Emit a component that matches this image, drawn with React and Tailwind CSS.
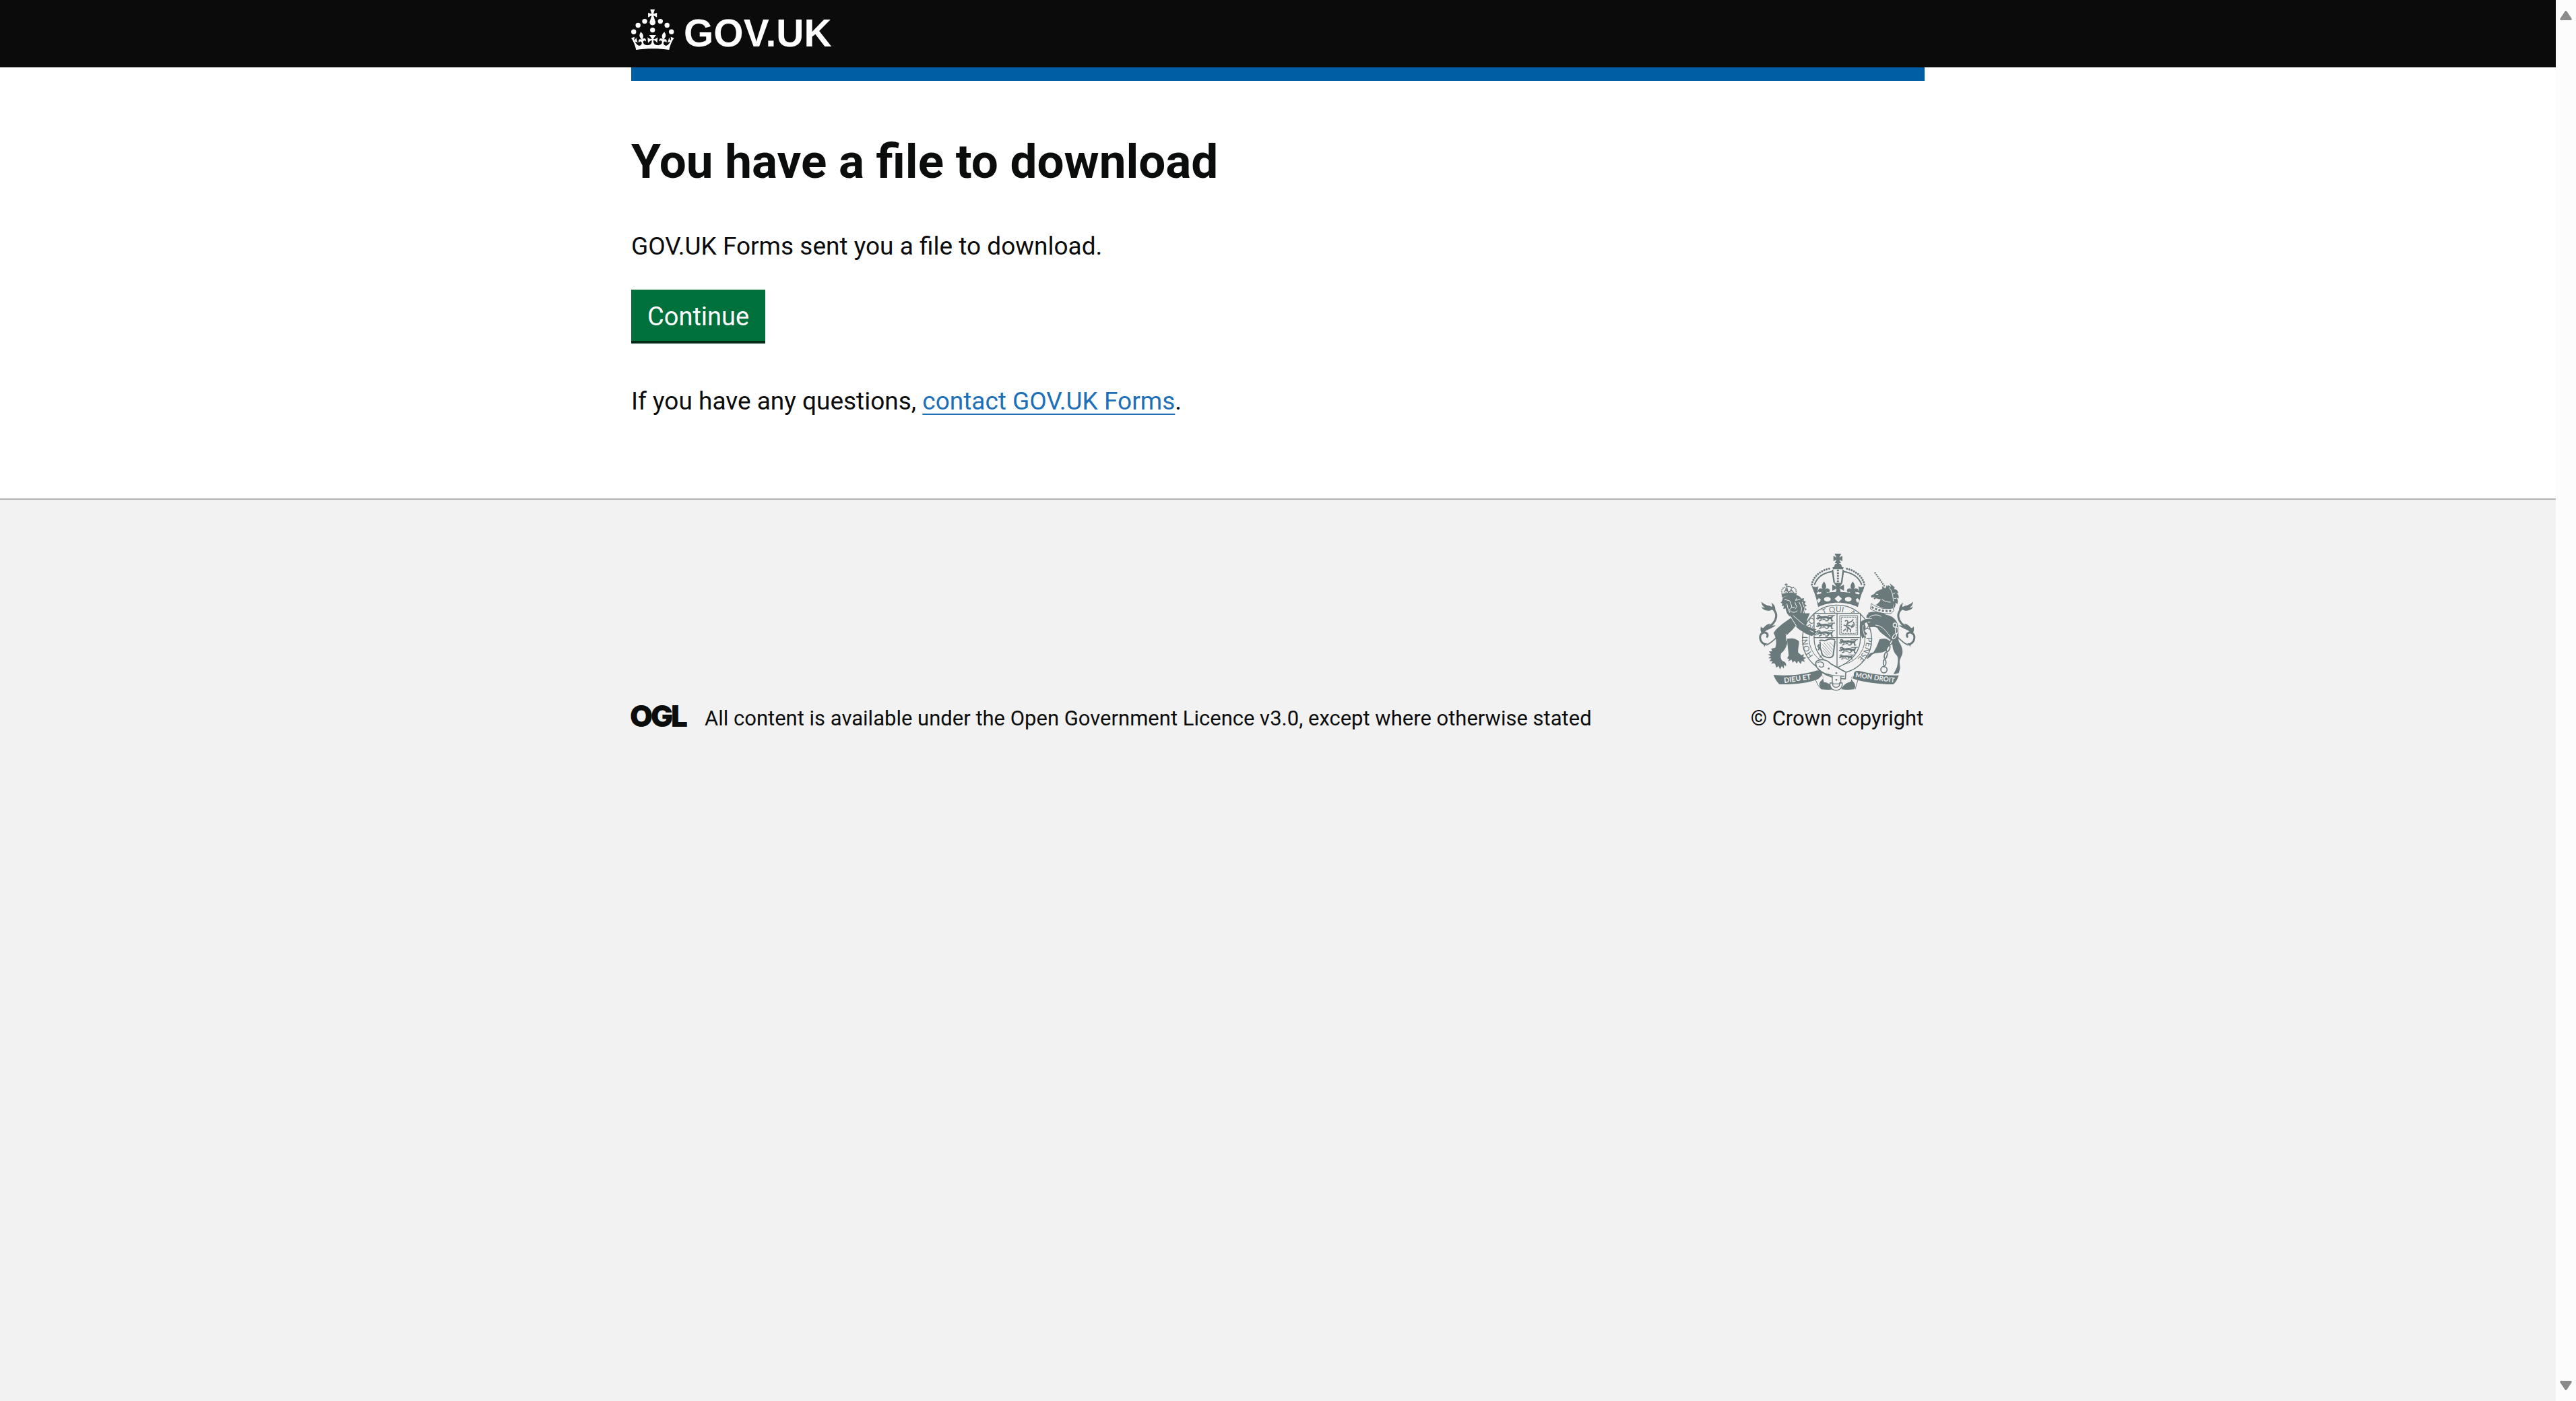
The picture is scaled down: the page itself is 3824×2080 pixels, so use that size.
import React from "react";

const FONT = "font-['Roboto','Liberation_Sans',sans-serif]";

function Crown() {
  return (
    <svg viewBox="0 0 64 60" className="h-[60px] w-[64px] fill-current" aria-hidden="true">
      <circle cx="20" cy="17.6" r="3.7" />
      <circle cx="10.2" cy="23.5" r="3.7" />
      <circle cx="3.7" cy="33.2" r="3.7" />
      <circle cx="31.7" cy="30.6" r="3.7" />
      <circle cx="43.3" cy="17.6" r="3.7" />
      <circle cx="53.2" cy="23.5" r="3.7" />
      <circle cx="59.7" cy="33.2" r="3.7" />
      <path d="M33.1,9.8c.2-.1.3-.3.5-.5l4.6,2.4v-6.8l-4.6,1.5c-.1-.2-.3-.3-.5-.5l1.9-5.9h-6.7l1.9,5.9c-.2.1-.3.3-.5.5l-4.6-1.5v6.8l4.6-2.4c.1.2.3.3.5.5l-2.6,8c-.9,2.8,1.2,5.7,4.1,5.7h0c3,0,5.1-2.9,4.1-5.7l-2.6-8ZM37,37.9s-3.4,3.8-4.1,6.1c2.2,0,4.2-.5,6.4-2.8l-.7,8.5c-2-2.8-4.4-4.1-5.7-3.8.1,3.1.5,6.7,5.8,7.2,3.7.3,6.7-1.5,7-3.8.4-2.6-2-4.3-3.7-1.6-1.4-4.5,2.4-6.1,4.9-3.2-1.9-4.5-1.8-7.7,2.4-10.9,3,4,2.6,7.3-1.2,11.1,2.4-1.3,6.2,0,4,4.6-1.2-2.8-3.7-2.2-4.2.2-.3,1.7.7,3.7,3,4.2,1.9.3,4.7-.9,7-5.9-1.3,0-2.4.7-3.9,1.7l2.4-8c.6,2.3,1.4,3.7,2.2,4.5.6-1.6.5-2.8,0-5.3l5,1.8c-2.6,3.6-5.2,8.7-7.3,17.5-7.4-1.1-15.7-1.7-24.5-1.7h0c-8.8,0-17.1.6-24.5,1.7-2.1-8.9-4.7-13.9-7.3-17.5l5-1.8c-.5,2.5-.6,3.7,0,5.3.8-.8,1.6-2.3,2.2-4.5l2.4,8c-1.5-1-2.6-1.7-3.9-1.7,2.3,5,5.2,6.2,7,5.9,2.3-.4,3.3-2.4,3-4.2-.5-2.4-3-3.1-4.2-.2-2.2-4.6,1.6-6,4-4.6-3.7-3.7-4.2-7.1-1.2-11.1,4.2,3.2,4.3,6.4,2.4,10.9,2.5-2.8,6.3-1.3,4.9,3.2-1.8-2.7-4.1-1-3.7,1.6.3,2.3,3.3,4.1,7,3.8,5.4-.5,5.7-4.2,5.8-7.2-1.3-.2-3.7,1-5.7,3.8l-.7-8.5c2.2,2.3,4.2,2.7,6.4,2.8-.7-2.3-4.1-6.1-4.1-6.1h10.6,0Z" />
    </svg>
  );
}

function OglLogo() {
  return (
    <svg
      viewBox="0 0 82 34"
      className="h-[34px] w-[82px] shrink-0 overflow-visible fill-current font-['Inter',sans-serif] text-[44px] font-black"
      role="img"
      aria-label="OGL"
    >
      <text x="-2" y="33">O</text>
      <text x="29" y="33">G</text>
      <text x="59" y="33">L</text>
    </svg>
  );
}

function Passant({ x, y }) {
  return (
    <g transform={`translate(${x} ${y})`} fill="none" stroke="currentColor" strokeLinecap="round" strokeLinejoin="round">
      <path d="M6 4c4-4 11-3 11 2s-5 5-9 4" strokeWidth="6" />
      <path d="M17 9c12 4 22-3 34 1s11 5 17 1" strokeWidth="10" />
      <path d="M16 12 8 17l-6-2M22 13v9l-8 3M50 13l6 6-6 6h-7M62 12l8 6-2 7h6" strokeWidth="5" />
      <path d="M68 9c9-1 6-9 0-8s-9 2-14 0M74 2l8-1M30 20c4-3 8-2 10 0" strokeWidth="4" />
    </g>
  );
}

function SideTail() {
  return (
    <g>
      <path d="M122 470C96 462 90 428 112 418c14-5 24 7 18 18M104 424c22-30 62-40 66-78 2-22-14-38-32-44" fill="none" stroke="currentColor" strokeWidth="9" strokeLinecap="round" />
      <path d="M126 474C152 462 182 432 214 388" fill="none" stroke="currentColor" strokeWidth="5" />
      <path d="M156 314C140 292 122 300 104 280c2 16 8 22 16 26-8 0-12-2-16-4 6 14 20 18 36 18zM150 306c4-8 2-14-2-22 14 8 20 20 18 36zM108 424C98 410 100 400 102 390c4 8 8 8 12 6 8-10 20-20 34-18-8 4-10 8-12 14 10-6 22-8 32-6-16 10-34 20-46 22zM112 464l6 18c2-10 6-14 16-16z" />
    </g>
  );
}

function RoyalArms() {
  return (
    <svg viewBox="66 66 750 612" className="h-[204px] w-[250px] fill-current text-[#6a797c]" aria-hidden="true">
      <defs>
        <path id="garter" d="M441 568A131 121 0 0 1 441 326A131 121 0 0 1 441 568" />
      </defs>

      {/* crown */}
      <path d="M430 66h30l-9 17 14-7v24l-14-8 8 16h-28l8-16-14 8V76l14 7zM428 128c0-14 8-20 17-20s18 6 18 20z" />
      <path d="M421 126h49l-2 10h-45zM424 136l8 60h-7l-8-56zM466 136l-8 60h7l8-56z" />
      <path d="M445 137v58" fill="none" stroke="currentColor" strokeWidth="9" strokeDasharray="8 4" />
      <g fill="none" stroke="currentColor" strokeLinecap="round">
        <path d="M329 204C336 164 372 138 414 131M563 204C554 164 518 138 476 131" strokeWidth="9" strokeDasharray="0.1 11" />
        <path d="M341 203C352 172 380 152 416 146M550 203C540 172 510 152 474 146" strokeWidth="6" />
      </g>
      <path d="M328 210c20 4 22 22 32 26-8 4-10 2-10 6l8 14C398 240 492 240 534 256l8-14c0-4-4-2-10-6 12-6 14-22 32-26-14 34-22 60-30 94-52-26-126-26-177 0-6-34-14-60-29-94z" />
      <path d="M361 246c10-8 66-14 84-14s74 6 86 14l8-30c-10 2-14-4-16-10H370c-4 8-8 10-16 10z" fill="#f2f2f2" />
      <path d="M332 212c14 4 20 4 26-2l-4 26h-16zM562 212c-14 4-20 4-26-2l4 26h16zM427 196h39l-12 17 18-9v27l-18-9 6 27h-27l6-27-19 9v-27l18 9z" />
      {[383, 511].map((x) => (
        <path
          key={x}
          transform={`translate(${x} 0)`}
          d="M0 190c12 16 12 26 4 36 6-8 20-8 22 4 0 8-10 12-14 4 2 10-2 12-6 14h-12c-4-2-8-4-6-14-4 8-14 4-14-4 2-12 16-12 22-4-8-10-8-20 4-36z"
        />
      ))}
      <path d="M345 250c60-18 142-18 202 0l-4 14c-50-16-144-16-194 0z" />
      <g fill="#f2f2f2">
        <path d="M352 274l8-10 9 6-5 12-7 2zM541 274l-8-10-9 6 5 12 7 2zM447 252l16 15-16 15-17-15z" />
        <ellipse cx="398" cy="269" rx="15" ry="10" />
        <ellipse cx="491" cy="269" rx="15" ry="10" />
      </g>

      {/* lion */}
      <SideTail />
      <path d="M238 352c22-16 50-22 82-20l-14 32c14 22 26 34 44 40l2 18c-12 4-24 4-34 2-24-6-48-18-62-36-14 22-34 34-40 44 0 16 6 28 2 38-6 18-14 30-26 40-4 14-2 24 4 32 12 6 20 8 18 26l-8-8-2 18-9-12-8 16-6-16-12 8c0-8-2-14-6-20l-16 2 8-10c-6-2-12-2-16-1l10-12-14-2 12-8-14-8 13-2-8-12h14l-4-12 18-4c8-22 4-46-8-66 18-26 50-48 78-67z" />
      <path d="M218 446c20-6 44-2 54 12 0 16-6 32-4 48l14 12 12-4-4 12 14 4-12 6 6 12-14-4-4 14-12-14-6 12-10-14-8 10-6-14-14 8 4-12c-10 2-10-4-2-14z" />
      <path d="M200 262c-4 14-4 18-10 22l8 4-4 12 10-2-2 14 10-2c2 16 10 34 30 42 24 4 42 0 56-18l-2-14 10-6-8-8 8-10-10-6 6-12-10-2 2-12-12 2c-6-10-16-16-30-16-20 0-40 4-52 12z" />
      <path
        d="M208 270l22 6 4 8M262 264l-6 10 20-4M234 284l6 20-10 10 2 10M254 284l8 20-8 8M240 306l12-2M238 324c6 6 18 4 26-4M272 282l12 26-4 20M218 290l4 18 8 20M286 282l8 22M232 344l28 44M246 342l62 54 34 14M214 424l2 30M300 300l-8 30"
        fill="none"
        stroke="#f2f2f2"
        strokeWidth="3"
        strokeLinecap="round"
      />
      <path d="M196 262c18-10 44-12 62-8l4-10c-20-8-44-6-68 2z" />
      <g fill="none" stroke="currentColor">
        <path d="M196 244c-4-16 2-26 12-28 6 2 8 12 6 24M258 246c4-16-2-28-14-30-8 2-10 12-8 26" strokeWidth="5" strokeDasharray="5 3" />
        <path d="M214 198v12M208 204h13M216 210l8 32M218 212c10-2 18 2 24 8M204 238l10-12 12 12 12-10 12 14" strokeWidth="4" />
      </g>

      {/* unicorn */}
      <g transform="matrix(-1 0 0 1 884 0)">
        <SideTail />
      </g>
      <path d="M609 149l46 66" fill="none" stroke="currentColor" strokeWidth="7" strokeDasharray="6 4" />
      <path d="M594 262l-1-10 14-7c8-12 20-16 36-22l-2-12 16 10 4-14 8 14c16 6 24 18 24 34 0 14 4 30-4 40-24-6-34-4-46-24-10-2-20-2-28-6l-8 5-3-6 8-4z" />
      <path d="M636 262l54-4 2 54c-30 2-54-4-78-18 14-8 22-18 22-32z" />
      <path d="M668 206l14 8-6-16 22 18-4 8c14 0 18 8 20 18l-9-2c10 8 12 16 10 26l-9-4c6 8 8 18 4 28l-9-6c2 8 0 18-6 26-4-20-6-40-10-56s-12-30-24-36z" />
      <path d="M672 216c14 14 18 34 20 62M700 240l-10 6M706 264l-10 2M614 246l10 2M640 268c10 10 24 14 40 14" fill="none" stroke="#f2f2f2" strokeWidth="3" />
      <path d="M594 288c28 22 64 28 96 20l4 12-12 12c-32 4-66-4-92-20z" fill="#f2f2f2" stroke="currentColor" strokeWidth="3" />
      <path d="M596 304c28 16 60 20 90 16" fill="none" stroke="currentColor" strokeWidth="9" strokeDasharray="9 7" />
      <path d="M578 330c22-10 56-6 82 8 28 4 50 24 54 52 4 24-2 48 2 66 10 18 20 34 16 56-6 18-14 28-12 42l2 22-6 22-24 6c6-14 16-26 18-44 2-16 6-34-6-44-14-16-16-36-18-58-22-24-50-32-66-62-18-8-38-2-50 8l-6 38 4 6-16-12c-2-22-2-40 4-52 20-6 32-12 46-22l-8-8-22-2c0-12 2-14 10-18z" />
      <path d="M572 384c-8 10-8 20 0 32 2 16-6 24-14 28-8-16-14-40-10-64 10-10 24-10 38-6zM630 448c20-8 44-2 48 12-2 28-18 44-40 46-14 4-36-2-48 18l-16 12c4-16 12-30 28-30 12-14 20-36 28-58z" />
      <g fill="none" stroke="#f2f2f2" strokeWidth="4">
        <ellipse cx="699" cy="384" rx="8" ry="9" />
        <ellipse cx="707" cy="408" rx="6" ry="14" />
        <ellipse cx="697" cy="434" rx="6" ry="13" transform="rotate(35 697 434)" />
        <path d="M584 350c16-14 40-14 54-4M612 384c24 2 40 14 66 52" strokeWidth="3" />
      </g>
      <g fill="#f2f2f2" stroke="currentColor" strokeWidth="5">
        <ellipse cx="682" cy="461" rx="5" ry="13" transform="rotate(28 682 461)" />
        <ellipse cx="669" cy="489" rx="6" ry="14" transform="rotate(24 669 489)" />
        <ellipse cx="658" cy="519" rx="6" ry="14" transform="rotate(14 658 519)" />
        <ellipse cx="653" cy="551" rx="6" ry="13" />
        <circle cx="650" cy="583" r="14" />
      </g>

      {/* garter and shield */}
      <ellipse cx="441" cy="447" rx="154" ry="152" fill="#f2f2f2" stroke="currentColor" strokeWidth="4" />
      <ellipse cx="441" cy="447" rx="124" ry="116" fill="none" stroke="currentColor" strokeWidth="3" />
      <g className="font-['Lato',sans-serif] text-[35px] font-normal">
        <text><textPath href="#garter" startOffset="15%">HONI</textPath></text>
        <text><textPath href="#garter" startOffset="31%">SOI</textPath></text>
        <text><textPath href="#garter" startOffset="42%">T QUI</textPath></text>
        <text><textPath href="#garter" startOffset="57%">A</textPath></text>
        <text><textPath href="#garter" startOffset="68%">Y</textPath></text>
        <text><textPath href="#garter" startOffset="74%">PENSE</textPath></text>
      </g>
      <path d="M339 332h206v112c0 56-38 104-104 130-66-26-102-74-102-130z" fill="#f2f2f2" stroke="currentColor" strokeWidth="4" />
      <path d="M441 332v240M339 440h206" fill="none" stroke="currentColor" strokeWidth="4" />
      <Passant x={348} y={340} />
      <Passant x={348} y={374} />
      <Passant x={348} y={408} />
      <g fill="none" stroke="currentColor">
        <path d="M453 342h80v86h-80z" strokeWidth="3" />
        <path d="M460 349h66v72h-66z" strokeWidth="3" strokeDasharray="9 3" />
        <path d="M478 366c8-6 14 0 10 8l-6 14 8 12-4 12M490 376l18-10 4-6M488 384l18 6 6-8M488 392l14 14-2 8M482 388l-10-4M480 402l-10 8M514 372c8 10 2 20-8 22" strokeWidth="5" strokeLinecap="round" />
      </g>
      <g fill="none" stroke="currentColor" strokeWidth="6">
        <path d="M362 454c12-8 20 4 30-2s24-10 40-2M364 458c8 14-4 22 4 34s0 22 14 30 36 12 42-4l8-64" />
        <path d="M376 470l38 44M376 484l32 34M378 498l22 24M382 462l38 44M396 462l26 32M408 460l18 20" strokeWidth="2" />
        <path d="M362 470l-6 8 6 8-4 10M372 522l-8 6" />
      </g>
      <Passant x={450} y={448} />
      <Passant x={450} y={482} />
      <g transform="translate(450 516) scale(0.8)">
        <Passant x={0} y={0} />
      </g>
      {/* paws gripping the shield */}
      <path d="M284 378c20 12 44 22 66 24l-8 7 12 6-10 6 6 10-14-4-6 6c-20-6-38-14-50-28zM600 372c-18-6-28-2-36 6 6 12 6 22 0 32l12 14-8 4 2 14-10-4-6 6c-10-20-16-52-8-74 16-14 40-18 66-8z" />
      <path d="M558 384c-4 18 0 34 8 50M320 408l18 8" fill="none" stroke="#f2f2f2" strokeWidth="3" />

      {/* ribbon scrolls */}
      <path d="M158 606c70 6 130 0 196-20 14-2 24 6 20 22l-16 16c-40 18-110 26-174 24-12-12-20-26-26-42zM716 608c-66 2-126-6-178-20-14-2-24 4-22 20l-6 14c44 16 112 26 182 26 12-10 18-24 24-40z" />
      <path d="M376 606c6 10 4 18-8 28-10 12-6 26 4 36 20 4 42 2 56 0-10-18-24-30-46-32zM510 610c-8 8-6 18 6 30 10 12 6 24 0 30-20 4-42 2-56 0 8-18 22-30 42-34z" />
      <path d="M346 630c8 16 12 30 28 40M534 628l-12 42" fill="none" stroke="currentColor" strokeWidth="3" />

      {/* belt and buckle */}
      <path d="M348 548c14-16 48-12 64 8l68 38-2 30c-44-2-80-12-104-30-20-14-34-28-26-46z" fill="#f2f2f2" stroke="currentColor" strokeWidth="5" />
      <path d="M354 552c10-8 26-4 28 8s-14 16-20 6M356 580c24 24 60 32 116 32" fill="none" stroke="currentColor" strokeWidth="4" />
      <circle cx="404" cy="578" r="4" />
      <circle cx="438" cy="598" r="4" />
      <path d="M420 610v36h38v-34" fill="#f2f2f2" stroke="currentColor" strokeWidth="4" />
      <circle cx="438" cy="628" r="4" />
      <path d="M410 642v10c4 30 50 30 54 0v-10h-12v10c-4 12-26 12-30 0v-10z" fill="#f2f2f2" stroke="currentColor" strokeWidth="4" />

      <g fill="#f2f2f2" className="font-['Lato',sans-serif] text-[32px] font-bold">
        <text transform="translate(206 642) rotate(-8)">DIEU ET</text>
        <text transform="translate(522 616) rotate(8)" className="text-[30px]">MON DROIT</text>
      </g>
    </svg>
  );
}

function Scrollbar() {
  return (
    <div className="sticky top-0 flex h-screen w-[30px] shrink-0 flex-col items-center justify-between bg-[#fcfcfc] py-4 text-[#8b8b8b]" aria-hidden="true">
      <svg viewBox="0 0 18 14" className="h-[14px] w-[18px] fill-current">
        <path d="M7.5 1Q9-.8 10.5 1l7 10.5Q18.500 14 16 14H2Q-.5 14 .5 11.5z" />
      </svg>
      <svg viewBox="0 0 18 14" className="h-[14px] w-[18px] fill-current">
        <path d="M7.5 13Q9 14.8 10.5 13l7-10.5Q18.500 0 16 0H2Q-.5 0 .5 2.5z" />
      </svg>
    </div>
  );
}

export default function App() {
  return (
    <div className={`flex min-h-screen bg-white text-[#0b0c0c] ${FONT}`}>
      <div className="flex min-w-0 flex-1 flex-col">
        <header className="bg-[#0b0b0b] text-white">
          <div className="mx-auto h-[100px] max-w-[1920px] pt-3.5">
            <a href="#home" className="inline-flex gap-4" aria-label="GOV.UK">
              <Crown />
              <svg
                viewBox="0 0 230 60"
                className="h-[60px] w-[230px] overflow-visible fill-current font-['Liberation_Sans',sans-serif] text-[57px] font-bold"
                aria-hidden="true"
              >
                <text x="-2" y="55">GOV.UK</text>
              </svg>
            </a>
          </div>
        </header>

        <div className="mx-auto h-5 w-full max-w-[1920px] bg-[#005ea5]" />

        <main className="mx-auto w-full max-w-[1920px] pt-20 pb-[118px] text-[37px] leading-[52px]">
          <h1 className="mb-[60px] text-[71px] leading-[80px] font-bold">You have a file to download</h1>
          <p className="mb-[38px]">GOV.UK Forms sent you a file to download.</p>
          <button
            type="button"
            className="mb-[60px] block border-b-4 border-[#002d18] bg-[#00703c] px-6 pt-3.5 pb-2.5 text-[38px] leading-[52px] text-white"
          >
            Continue
          </button>
          <p>
            If you have any questions,{" "}
            <a href="#contact" className="text-[#1d70b8] underline decoration-2 underline-offset-6">
              contact GOV.UK Forms
            </a>
            .
          </p>
        </main>

        <footer className="flex-1 border-t-2 border-[#b1b4b6] bg-[#f2f2f2] pt-20 text-[31px] leading-[42px]">
          <div className="mx-auto flex max-w-[1920px] items-end justify-between">
            <div className="flex gap-[27px]">
              <OglLogo />
              <p>
                All content is available under the Open Government Licence v3.0, except where otherwise stated
              </p>
            </div>
            <a href="#copyright" className="flex w-[260px] flex-col items-center gap-5">
              <RoyalArms />
              © Crown copyright
            </a>
          </div>
        </footer>
      </div>
      <Scrollbar />
    </div>
  );
}
